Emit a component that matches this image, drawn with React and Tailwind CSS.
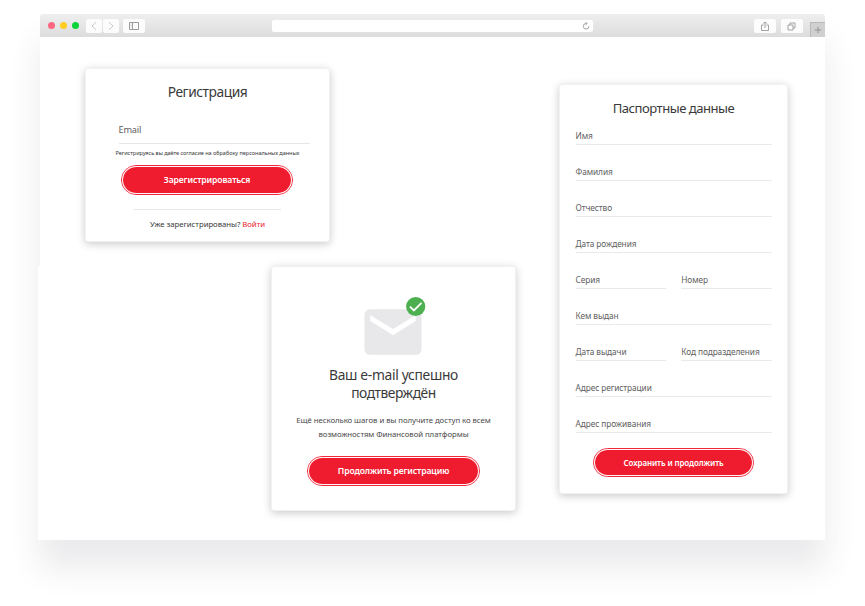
function Card({ className, children }) {
  return (
    <section className={`flex flex-col items-center rounded-[3px] border border-[#f1f1f1] bg-white shadow-[0_2px_8px_rgba(0,0,0,0.21)] ${className}`}>
      {children}
    </section>
  )
}

function PillButton({ className, children }) {
  return (
    <button className={`shrink-0 rounded-full border border-[#f0283b] bg-[#fdd5d9] ${className}`}>
      <span className="flex h-full w-full items-center justify-center rounded-full border border-white/70 bg-[#ef1b2e] bg-clip-padding font-semibold whitespace-nowrap text-white">
        {children}
      </span>
    </button>
  )
}

function Field({ label }) {
  return (
    <div className="flex h-9 flex-1 flex-col justify-end border-b border-[#e9e9e9] pb-[3px] text-[8.3px] leading-[11px] tracking-[-0.08px] whitespace-nowrap text-[#606060]">
      {label}
    </div>
  )
}

function ToolButton({ className, children }) {
  return (
    <div className={`flex h-[14px] items-center justify-center rounded-[2px] bg-[#fcfcfc] ${className}`}>
      {children}
    </div>
  )
}

function Toolbar() {
  return (
    <header className="flex h-[23px] items-center rounded-t-[3px] bg-linear-to-b from-[#efefef] to-[#dcdcdc]">
      <div className="ml-2 flex gap-[4.6px]">
        <span className="size-[7.2px] rounded-full bg-[#ff6680]" />
        <span className="size-[7.2px] rounded-full bg-[#ffcc22]" />
        <span className="size-[7.2px] rounded-full bg-[#0bd43a]" />
      </div>
      <div className="ml-[7px] flex gap-px pt-px">
        <ToolButton className="w-4">
          <svg viewBox="0 0 16 14" className="h-[14px] w-4" fill="none" stroke="#cacaca">
            <path d="M10 3.200 6 7l4 3.800" />
          </svg>
        </ToolButton>
        <ToolButton className="w-4">
          <svg viewBox="0 0 16 14" className="h-[14px] w-4" fill="none" stroke="#cacaca">
            <path d="M6 3.200 10 7l-4 3.800" />
          </svg>
        </ToolButton>
      </div>
      <ToolButton className="mt-px ml-1 w-[22px]">
        <svg viewBox="0 0 10 8" className="h-2 w-[10px]" fill="none" stroke="#9c9c9c">
          <path d="M.5.5h9v7h-9zM3.500.5v7" />
          <path d="M1.500 2h1M1.500 3.500h1M1.500 5h1" strokeWidth=".5" />
        </svg>
      </ToolButton>
      <div className="ml-[127px] flex h-3 w-[321px] items-center justify-end rounded-[2px] bg-white pr-[3px]">
        <svg viewBox="0 0 8 8" className="mt-px size-2" fill="none" stroke="#8f8f8f" strokeWidth=".8">
          <path d="M6.900 4.200A2.800 2.800 0 1 1 4.100 1.500h.8M3.700.1 5.100 1.500 3.700 2.900" />
        </svg>
      </div>
      <ToolButton className="mt-px ml-[161px] w-[22px]">
        <svg viewBox="0 0 10 11" className="h-[11px] w-[10px]" fill="none" stroke="#999" strokeWidth=".9">
          <path d="M3.600 4H1.500v5.500h7V4H6.400M5 7V1M3.300 2.600 5 .9l1.700 1.700" />
        </svg>
      </ToolButton>
      <ToolButton className="mt-px ml-[5px] w-[22px]">
        <svg viewBox="0 0 9 9" className="size-[9px]" fill="none" stroke="#999" strokeWidth=".9">
          <path d="M1 3h5v5H1zM3 3V1h5v5H6" />
        </svg>
      </ToolButton>
      <div className="ml-auto flex h-[15px] w-[15px] items-center justify-center self-end border-t border-l border-[#b9b9b9] bg-[#d0d0d0]">
        <svg viewBox="0 0 8 8" className="size-2" stroke="#8d8d8d" strokeWidth=".9">
          <path d="M4 .8v6.400M.8 4h6.400" />
        </svg>
      </div>
    </header>
  )
}

function Registration() {
  return (
    <Card className="h-[174px] w-[245px] pt-[13px]">
      <h1 className="text-[13.8px] leading-5 tracking-[-0.46px] text-[#3a3a3a]">Регистрация</h1>
      <div className="mt-4 ml-[13px] flex h-[26px] w-[191px] items-center border-b border-[#e6e6e6] pb-[2px] text-[9.2px] tracking-[-0.2px] text-[#606060]">
        Email
      </div>
      <p className="mt-[5px] text-[5.6px] leading-[9px] tracking-[-0.07px] whitespace-nowrap text-[#3a3a3a]">
        Регистрируясь вы даёте согласие на обрабоку персональных данных
      </p>
      <PillButton className="mt-[7px] mr-px h-[30px] w-[172px] text-[8.6px] tracking-[-0.12px]">Зарегистрироваться</PillButton>
      <div className="mt-[14px] w-[147px] border-b border-[#e6e6e6]" />
      <p className="mt-[9px] text-[7.8px] leading-[11px] tracking-[-0.05px] text-[#3a3a3a]">
        Уже зарегистрированы? <a className="text-[#ef1b2e]">Войти</a>
      </p>
    </Card>
  )
}

function EmailConfirmed() {
  return (
    <Card className="h-[245px] w-[245px] pt-[29px] text-center">
      <svg viewBox="0 0 62 59" className="ml-[3px] h-[59px] w-[62px]">
        <rect x="0.500" y="13.300" width="57" height="45.500" rx="5.500" fill="#e8e8ea" />
        <path d="M6.300 19.300 29 33l22.700-13.700v5.700L29 39.200 6.300 25z" fill="#fff" />
        <circle cx="51.700" cy="10.500" r="9.600" fill="#4caf50" />
        <path d="m45.900 10.600 4 3.900 7.600-7.700" fill="none" stroke="#fff" strokeWidth="1.800" />
      </svg>
      <h2 className="mt-[11px] text-[13.8px] leading-[18px] text-[#3a3a3a]">
        <span className="block tracking-[-0.31px]">Ваш e-mail успешно</span>
        <span className="block tracking-[-0.44px]">подтверждён</span>
      </h2>
      <p className="mt-3 text-[7.8px] leading-[13.5px] tracking-[-0.065px] whitespace-nowrap text-[#4a4a4a]">
        Ещё несколько шагов и вы получите доступ ко всем
        <br />
        возможностям Финансовой платформы
      </p>
      <PillButton className="mt-[15px] h-[30px] w-[173px] text-[8.6px] tracking-[-0.12px]">Продолжить регистрацию</PillButton>
    </Card>
  )
}

const rows = [
  ['Имя'],
  ['Фамилия'],
  ['Отчество'],
  ['Дата рождения'],
  ['Серия', 'Номер'],
  ['Кем выдан'],
  ['Дата выдачи', 'Код подразделения'],
  ['Адрес регистрации'],
  ['Адрес проживания'],
]

function PassportData() {
  return (
    <Card className="mt-4 h-[410px] w-[229px] px-[15px] pt-[13px]">
      <h2 className="text-[13.1px] leading-5 tracking-[-0.5px] text-[#3a3a3a]">Паспортные данные</h2>
      <div className="-mt-[9px] flex w-full flex-col pl-[0.5px]">
        {rows.map((row) => (
          <div key={row[0]} className="flex gap-[15px]">
            {row.map((label) => (
              <Field key={label} label={label} />
            ))}
          </div>
        ))}
      </div>
      <PillButton className="mt-[15px] h-[29px] w-[161px] text-[8px] tracking-[-0.1px]">Сохранить и продолжить</PillButton>
    </Card>
  )
}

export default function App() {
  return (
    <div className="h-[606px] w-[865px] overflow-hidden bg-white pt-[14px] pl-10 font-['Noto_Sans','Liberation_Sans',sans-serif]">
      <div className="relative h-[526px] w-[785px] rounded-t-[3px] shadow-[0_28px_32px_rgba(60,65,80,0.11)]">
        <span className="absolute bottom-0 -left-[2px] h-[274px] w-[2px] bg-white" />
        <Toolbar />
        <main className="flex h-[503px] bg-white pt-[31px] pl-[45px]">
          <div className="flex w-[431px] shrink-0 flex-col gap-6">
            <Registration />
            <div className="flex justify-end">
              <EmailConfirmed />
            </div>
          </div>
          <div className="ml-[43px]">
            <PassportData />
          </div>
        </main>
      </div>
    </div>
  )
}
